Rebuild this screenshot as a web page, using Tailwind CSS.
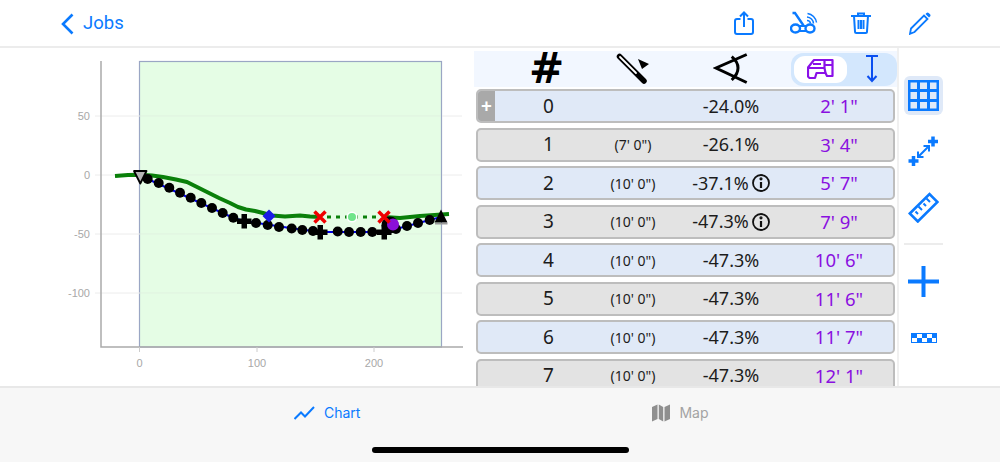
<!doctype html>
<html>
<head>
  <meta charset="UTF-8">
  <meta name="viewport" content="width=device-width, initial-scale=1.0">
  <script src="https://cdn.jsdelivr.net/npm/@tailwindcss/browser@4"></script>
</head>
<body class="w-[1000px] h-[462px] overflow-hidden bg-white font-['Noto_Sans',sans-serif]">
  <!-- Nav bar -->
  <header class="h-[48px] flex items-center border-b-2 border-[#ececec] text-[#0a7aff]">
    <div class="ml-[60px] mt-[1px] flex items-center gap-[9px]">
      <svg width="14" height="22" viewBox="0 0 14 22" fill="none" stroke="currentColor" stroke-width="2.6"><path d="M12.5 1.5 3 11l9.500 9.500"/></svg>
      <span class="font-['Roboto',sans-serif] text-[18.5px] leading-none">Jobs</span>
    </div>
    <div class="ml-auto flex items-center">
      <svg width="20" height="24" viewBox="0 0 20 24" fill="none" stroke="currentColor" stroke-width="2"><path d="M6.500 8H3a2 2 0 0 0-2 2v11a2 2 0 0 0 2 2h14a2 2 0 0 0 2-2V10a2 2 0 0 0-2-2h-3.500M10 16V2M6 5.500 10 1.500l4 4"/></svg>
      <svg class="ml-[36px]" width="28" height="24" viewBox="0 0 28 24" fill="none" stroke="currentColor" stroke-width="2.400"><path d="M2.500 2H5l8.500 12.500"/><ellipse cx="5.500" cy="17.500" rx="4.500" ry="4"/><ellipse cx="20" cy="17.500" rx="4.500" ry="4"/><path d="M9 15h7.500M9 20h7.500" stroke-width="2"/><path d="M17 9.500a3.500 3.500 0 0 1 3.500 3M17 6a7 7 0 0 1 6.500 6.500M17.500 2.500a10.500 10.500 0 0 1 9 9" stroke-width="1.500"/></svg>
      <svg class="ml-[33px]" width="20" height="22" viewBox="0 0 20 22" fill="none" stroke="currentColor" stroke-width="2"><path d="M0 4h20M7 4V1.500h6V4M3 4l1 15.500a1.500 1.500 0 0 0 1.500 1.500h9a1.500 1.500 0 0 0 1.500-1.500L17 4M7.500 8v9M10 8v9M12.500 8v9"/></svg>
      <svg class="ml-[38px] mr-[69px]" width="22" height="23" viewBox="0 0 22 23" fill="none" stroke="currentColor"><path d="M2 16.500 15 3.500l3.500 3.500-13 13-4.500 1.800z" stroke-width="1.800"/><path d="M16.500 2l1-1a1.600 1.600 0 0 1 2.200 0l1.300 1.300a1.600 1.600 0 0 1 0 2.200l-1 1z" fill="currentColor" stroke="none"/></svg>
    </div>
  </header>

  <main class="h-[338px] flex overflow-hidden">
    <!-- Chart -->
    <svg class="w-[474px] h-[338px] shrink-0" viewBox="0 48 474 338" font-family="Liberation Sans, sans-serif" font-size="11" fill="#a8a8a8">
      <rect x="139.500" y="61.500" width="302" height="285.500" fill="#e5fde5" stroke="#9aa6c4" stroke-width="1.200"/>
      <path d="M95 116h45M95 175h45M95 234h45M95 293h45M442 116h20M442 175h20M442 234h20M442 293h20" stroke="#ececec"/>
      <path d="M140 116h301M140 175h301M140 234h301M140 293h301" stroke="#dcecdc" stroke-width=".6"/>
      <path d="M101 61v286h362" fill="none" stroke="#aaa" stroke-width="1.500"/>
      <path d="M139.500 347v5M257 347v5M374 347v5" stroke="#ccc"/>
      <g opacity=".99">
        <text x="90" y="120" text-anchor="end">50</text>
        <text x="90" y="179" text-anchor="end">0</text>
        <text x="90" y="238" text-anchor="end">-50</text>
        <text x="90" y="297" text-anchor="end">-100</text>
        <text x="139.500" y="367" text-anchor="middle">0</text>
        <text x="257" y="367" text-anchor="middle">100</text>
        <text x="374" y="367" text-anchor="middle">200</text>
      </g>
      <!-- tractor path -->
      <path d="M115 176 128 175 140 174.700 152 175.500 163 177 176 179.500 187 182 197 187 207 192 219 198 230 203 238 207 246 209.500 255 211 263 213 272 215.500 285 216.500 300 215.500 310 216.500 320 217M384 217 400 218 420 216 449 214" fill="none" stroke="#0a800a" stroke-width="4" stroke-linejoin="round"/>
      <path d="M327 217H380" fill="none" stroke="#0a800a" stroke-width="3" stroke-dasharray="4 5"/>
      <!-- cut line -->
      <path d="M147.700 179 233 217.700 244 221 290 228 320 232H384L396 229 441 217" fill="none" stroke="#0000e6" stroke-width="2"/>
      <g fill="#000">
        <circle cx="147.700" cy="179" r="5"/><circle cx="158.700" cy="183" r="5"/><circle cx="169.300" cy="187.700" r="5"/><circle cx="180" cy="192.700" r="5"/><circle cx="190.700" cy="197.700" r="5"/><circle cx="201.300" cy="203" r="5"/><circle cx="212" cy="208" r="5"/><circle cx="222.700" cy="213" r="5"/><circle cx="233.300" cy="217.700" r="5"/>
        <circle cx="256" cy="223" r="5"/><circle cx="267.700" cy="225" r="5"/><circle cx="279" cy="227" r="5"/><circle cx="291.700" cy="228.500" r="5"/><circle cx="302.300" cy="230" r="5"/><circle cx="313" cy="231" r="5"/><circle cx="337.700" cy="231.500" r="5"/><circle cx="349" cy="232" r="5"/><circle cx="360.700" cy="232" r="5"/><circle cx="372.300" cy="232" r="5"/><circle cx="396" cy="229" r="5"/><circle cx="407" cy="226" r="5"/><circle cx="418" cy="223" r="5"/><circle cx="429.700" cy="220" r="5"/>
      </g>
      <path d="M241.500 214h5.500v4.500h4.500v5.500H247v4.500h-5.500V224H237v-5.500h4.500zM317.500 225h5.500v4.500h4.500v5.500H323v4.500h-5.500V235H313v-5.500h4.500zM381.500 225h5.500v4.500h4.500v5.500H387v4.500h-5.500V235H377v-5.500h4.500z" fill="#000"/>
      <circle cx="390" cy="225" r="8.500" fill="#000"/>
      <circle cx="393" cy="224.500" r="6" fill="#8a10d8"/>
      <path d="M269 209.500l6.500 6.500-6.500 6.500-6.500-6.500z" fill="#1a1ae6"/>
      <circle cx="352" cy="217" r="4.800" fill="#6fe58a" stroke="#fff" stroke-width="1.600"/>
      <path d="M314.500 211.500l11 11M325.500 211.500l-11 11M378.500 211.500l11 11M389.500 211.500l-11 11" stroke="#f00000" stroke-width="3.500"/>
      <path d="M134 171h12.500l-6.200 12.500z" fill="#b5b5b5" stroke="#000" stroke-width="1.800" stroke-linejoin="round"/>
      <path d="M435 223h12.500v1.500H435z" fill="#999"/>
      <path d="M441 209.500l6.500 13h-13z" fill="#000"/>
    </svg>

    <!-- Table -->
    <section class="w-[423px] shrink-0 pt-[3px]">
      <div class="h-[36px] bg-[#f2f7ff] grid grid-cols-[115px_88px_108px_112px] items-center">
        <div class="pl-[30px] text-center font-['DejaVu_Sans',sans-serif] font-bold text-[42px] leading-[36px] text-black">#</div>
        <div class="flex justify-center">
          <svg width="34" height="32" viewBox="0 0 34 32" fill="none" stroke="#000"><path d="M3.500 3.500 28 28" stroke-width="5.500" stroke-linecap="round"/><path d="M4 4 20 20" stroke="#fff" stroke-width="1.800" stroke-linecap="round"/><path d="M22 6l11 5-7 5z" fill="#000" stroke="none"/></svg>
        </div>
        <div class="flex justify-center">
          <svg width="36" height="32" viewBox="0 0 36 32" fill="none" stroke="#000" stroke-width="3"><path d="M33.700 1.500 3 15l30.700 14.500"/><path d="M18.700 3.700c4.300 3.500 6.300 7.300 6.300 11.300s-2 8-6.300 12"/></svg>
        </div>
        <div class="ml-[6px] h-[33px] rounded-[12px] bg-[#d3e7fd] flex items-center">
          <div class="ml-[3px] w-[53px] h-[27px] rounded-[11px] bg-white flex items-center justify-center">
            <svg width="27" height="22" viewBox="0 0 27 22" fill="none" stroke="#8a10e8" stroke-width="2.200" stroke-linejoin="round"><path d="M1 13V9.500L7 2h18.500v16H20l-1.500-3h-9L8 20H2.500L1 18.500z"/><path d="M1 10h16.500V3M17.500 10l1 5M18 7h7.500M6 6h8"/></svg>
          </div>
          <svg class="ml-[18px]" width="14" height="28" viewBox="0 0 14 28" fill="none" stroke="#0b4ff0" stroke-width="2"><path d="M1 1h12M7 1v25M2.500 21 7 26l4.500-5"/></svg>
        </div>
      </div>

      <div id="rows" class="mt-[2px] flex flex-col gap-[4.500px] pl-[2px]">
        <div class="w-[419px] h-[34px] shrink-0 rounded-[5px] border-2 border-[#bdbdbd] bg-[#e0e9f7] grid grid-cols-[111px_88px_108px_108px] items-center text-[18px] text-[#1c1c1c] relative overflow-hidden">
          <div class="absolute left-0 top-0 bottom-0 w-[17px] bg-[#a9a9a9] text-white flex items-center justify-center text-[19px] font-bold">+</div>
          <div class="pl-[30px] text-center text-[19px]">0</div><div class="text-center text-[14px]"></div><div class="text-center">-24.0%</div><div class="text-center text-[#8a10e0] text-[18.5px]">2' 1"</div>
        </div>
        <div class="w-[419px] h-[34px] shrink-0 rounded-[5px] border-2 border-[#bdbdbd] bg-[#e3e3e3] grid grid-cols-[111px_88px_108px_108px] items-center text-[18px] text-[#1c1c1c]">
          <div class="pl-[30px] text-center text-[19px]">1</div><div class="text-center text-[14px]">(7' 0")</div><div class="text-center">-26.1%</div><div class="text-center text-[#8a10e0] text-[18.5px]">3' 4"</div>
        </div>
        <div class="w-[419px] h-[34px] shrink-0 rounded-[5px] border-2 border-[#bdbdbd] bg-[#e0e9f7] grid grid-cols-[111px_88px_108px_108px] items-center text-[18px] text-[#1c1c1c]">
          <div class="pl-[30px] text-center text-[19px]">2</div><div class="text-center text-[14px]">(10' 0")</div><div class="flex items-center justify-center gap-[3px]">-37.1%<svg width="18" height="18" viewBox="0 0 18 18" fill="none" stroke="#111" stroke-width="1.800"><circle cx="9" cy="9" r="8"/><path d="M9 8v6" stroke-width="2.200"/><circle cx="9" cy="4.800" r=".7"/></svg></div><div class="text-center text-[#8a10e0] text-[18.5px]">5' 7"</div>
        </div>
        <div class="w-[419px] h-[34px] shrink-0 rounded-[5px] border-2 border-[#bdbdbd] bg-[#e3e3e3] grid grid-cols-[111px_88px_108px_108px] items-center text-[18px] text-[#1c1c1c]">
          <div class="pl-[30px] text-center text-[19px]">3</div><div class="text-center text-[14px]">(10' 0")</div><div class="flex items-center justify-center gap-[3px]">-47.3%<svg width="18" height="18" viewBox="0 0 18 18" fill="none" stroke="#111" stroke-width="1.800"><circle cx="9" cy="9" r="8"/><path d="M9 8v6" stroke-width="2.200"/><circle cx="9" cy="4.800" r=".7"/></svg></div><div class="text-center text-[#8a10e0] text-[18.5px]">7' 9"</div>
        </div>
        <div class="w-[419px] h-[34px] shrink-0 rounded-[5px] border-2 border-[#bdbdbd] bg-[#e0e9f7] grid grid-cols-[111px_88px_108px_108px] items-center text-[18px] text-[#1c1c1c]">
          <div class="pl-[30px] text-center text-[19px]">4</div><div class="text-center text-[14px]">(10' 0")</div><div class="text-center">-47.3%</div><div class="text-center text-[#8a10e0] text-[18.5px]">10' 6"</div>
        </div>
        <div class="w-[419px] h-[34px] shrink-0 rounded-[5px] border-2 border-[#bdbdbd] bg-[#e3e3e3] grid grid-cols-[111px_88px_108px_108px] items-center text-[18px] text-[#1c1c1c]">
          <div class="pl-[30px] text-center text-[19px]">5</div><div class="text-center text-[14px]">(10' 0")</div><div class="text-center">-47.3%</div><div class="text-center text-[#8a10e0] text-[18.5px]">11' 6"</div>
        </div>
        <div class="w-[419px] h-[34px] shrink-0 rounded-[5px] border-2 border-[#bdbdbd] bg-[#e0e9f7] grid grid-cols-[111px_88px_108px_108px] items-center text-[18px] text-[#1c1c1c]">
          <div class="pl-[30px] text-center text-[19px]">6</div><div class="text-center text-[14px]">(10' 0")</div><div class="text-center">-47.3%</div><div class="text-center text-[#8a10e0] text-[18.5px]">11' 7"</div>
        </div>
        <div class="w-[419px] h-[34px] shrink-0 rounded-[5px] border-2 border-[#bdbdbd] bg-[#e3e3e3] grid grid-cols-[111px_88px_108px_108px] items-center text-[18px] text-[#1c1c1c]">
          <div class="pl-[30px] text-center text-[19px]">7</div><div class="text-center text-[14px]">(10' 0")</div><div class="text-center">-47.3%</div><div class="text-center text-[#8a10e0] text-[18.5px]">12' 1"</div>
        </div>
      </div>
    </section>

    <!-- Side tools -->
    <aside class="flex-1 border-l-2 border-[#f0f0f0] pl-[5px] text-[#0a7aff]">
      <div class="w-[39px] flex flex-col items-center">
        <div class="mt-[28px] w-[39px] h-[39px] rounded-[6px] bg-[#dfe9f8] flex items-center justify-center">
          <svg width="31" height="31" viewBox="0 0 31 31"><rect width="31" height="31" fill="#0a7aff"/><g fill="#dfe9f8"><rect x="2.500" y="2.500" width="6.500" height="6.500"/><rect x="12" y="2.500" width="7" height="6.500"/><rect x="22" y="2.500" width="6.500" height="6.500"/><rect x="2.500" y="12" width="6.500" height="7"/><rect x="12" y="12" width="7" height="7"/><rect x="22" y="12" width="6.500" height="7"/><rect x="2.500" y="22" width="6.500" height="6.500"/><rect x="12" y="22" width="7" height="6.500"/><rect x="22" y="22" width="6.500" height="6.500"/></g></svg>
        </div>
        <svg class="mt-[21px] shrink-0" width="31" height="31" viewBox="0 0 31 31" fill="none" stroke="currentColor"><path d="M25 .5v10M20 5.500h10M5.500 20v10M.5 25h10" stroke-width="3.500"/><path d="M10 21 21 10M10 15.500V21h5.500M15.500 10H21v5.500" stroke-width="2"/></svg>
        <svg class="mt-[25px] shrink-0" width="31" height="31" viewBox="0 0 31 31" fill="none" stroke="currentColor"><path d="M1.800 21.500 21.500 2l8 8-19.700 19.500z" stroke-width="2.600"/><path d="M10 22l-2.500-2.500M14 18l-3.500-3.500M18 14l-2.500-2.500M22 10l-3.500-3.500" stroke-width="2"/></svg>
        <div class="mt-[20px] w-[39px] h-[1.500px] shrink-0 bg-[#ececec]"></div>
        <svg class="mt-[21px] shrink-0" width="31" height="31" viewBox="0 0 31 31" fill="currentColor"><rect y="13.500" width="31" height="4"/><rect x="13.500" width="4" height="31"/></svg>
        <svg class="mt-[36px] shrink-0" width="26" height="10" viewBox="0 0 26 11" preserveAspectRatio="none"><rect width="26" height="11" fill="#0a7aff"/><path d="M6 1h5v4.500H6zM16 1h5v4.500h-5zM1 5.500h5V10H1zM11 5.500h5V10h-5zM21 5.500h4V10h-4z" fill="#fff"/></svg>
      </div>
    </aside>
  </main>

  <!-- Tab bar -->
  <footer class="relative h-[76px] bg-[#f7f7f7] border-t-2 border-[#e8e8e8]">
    <div class="absolute inset-x-0 top-[14px] flex font-['Inter',sans-serif] text-[14px]">
      <div class="ml-[294px] flex items-center gap-[9px] text-[#0a7aff]">
        <svg width="21" height="14" viewBox="0 0 21 14" fill="none" stroke="currentColor" stroke-width="2"><path d="M.5 13 7 6.500l4 4L20 1"/></svg>
        <span>Chart</span>
      </div>
      <div class="ml-[292px] flex items-center gap-[9px] text-[#a3a3a3]">
        <svg width="18" height="18" viewBox="0 0 18 18" fill="#8f8f8f"><path d="M0 3 5.500.5V15L0 17.500zM6.800.5l4.400 2.500v14.500L6.800 15zM12.500 3 18 .5V15l-5.500 2.500z"/></svg>
        <span>Map</span>
      </div>
    </div>
    <div class="absolute left-[372px] top-[59px] w-[257px] h-[6px] rounded-full bg-black"></div>
  </footer>
</body>
</html>
